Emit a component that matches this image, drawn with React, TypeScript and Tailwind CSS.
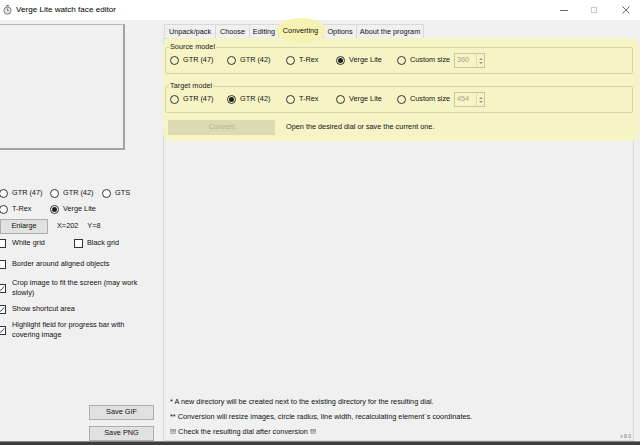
import React from "react";

const FONT = { fontFamily: '"Liberation Sans", Arial, sans-serif' };

function Radio({ checked, bg = "bg-white" }: { checked?: boolean; bg?: string }) {
  return (
    <span className={`w-[9px] h-[9px] rounded-full border border-[#333333] ${bg} flex items-center justify-center shrink-0`}>
      {checked && <span className="w-[5px] h-[5px] rounded-full bg-[#1f1f1f]" />}
    </span>
  );
}

function Check({ checked }: { checked?: boolean }) {
  return (
    <span className="w-[9px] h-[9px] border border-[#333333] bg-white flex items-center justify-center shrink-0">
      {checked && (
        <svg viewBox="0 0 7 7" className="w-[7px] h-[7px]">
          <path d="M0.8 3.6 L2.7 5.4 L6.2 1.4" stroke="#333" strokeWidth="0.9" fill="none" />
        </svg>
      )}
    </span>
  );
}

function RItem({ label, checked, w, bg }: { label: string; checked?: boolean; w: string; bg?: string }) {
  return (
    <div className={`flex items-center gap-[4px] ${w} shrink-0`}>
      <Radio checked={checked} bg={bg} />
      <span className="whitespace-nowrap">{label}</span>
    </div>
  );
}

function NumBox({ value }: { value: string }) {
  return (
    <div className="w-[31px] h-[15px] border border-[#c9c7a2] flex items-center justify-between shrink-0">
      <span className="pl-[2px] text-[#a8a68c]">{value}</span>
      <div className="w-[8px] h-full flex flex-col items-center justify-center gap-[2px] border-l border-[#dedcb6]">
        <svg viewBox="0 0 4 2" className="w-[4px] h-[2px]"><path d="M0 2 L2 0 L4 2Z" fill="#9a9880" /></svg>
        <svg viewBox="0 0 4 2" className="w-[4px] h-[2px]"><path d="M0 0 L2 2 L4 0Z" fill="#9a9880" /></svg>
      </div>
    </div>
  );
}

function Group({ title, sel }: { title: string; sel: number }) {
  const items = [
    { l: "GTR (47)", w: "w-[57px]" },
    { l: "GTR (42)", w: "w-[59px]" },
    { l: "T-Rex", w: "w-[50px]" },
    { l: "Verge Lite", w: "w-[61px]" },
    { l: "Custom size", w: "w-[57px]" },
  ];
  return (
    <div className="relative ml-[2px] w-[468px] h-[27px] border border-[#d6d4ab] rounded-[2px] flex items-center pl-[4px]">
      <span className="absolute left-[3px] top-[-6px] px-[1px] leading-[10px] bg-[#f6f4c4] text-[#1a1a1a]">{title}</span>
      {items.map((it, i) => (
        <RItem key={i} label={it.l} w={it.w} checked={i === sel} bg="bg-transparent" />
      ))}
      <NumBox value={sel === 3 ? "360" : "454"} />
    </div>
  );
}

function Tab({ label, w, selected }: { label: string; w: string; selected?: boolean }) {
  if (selected) {
    return (
      <div className={`relative ${w} h-[17px] flex items-center justify-center shrink-0 mb-[-1px] z-10`}>
        <span className="absolute left-[-2px] right-[-3px] top-[-4px] bottom-[-4px] rounded-[50%] bg-[#f6f3b2]" />
        <span className="relative leading-[10px]">{label}</span>
      </div>
    );
  }
  return (
    <div className={`${w} h-[14px] flex items-center justify-center shrink-0 border-t border-l border-r border-[#d9d9d9] bg-[#f0f0f0] -mr-[1px]`}>
      <span className="leading-[10px]">{label}</span>
    </div>
  );
}

export default function App() {
  return (
    <div className="w-[640px] h-[445px] bg-[#f0f0f0] flex flex-col overflow-hidden text-[7.3px] text-[#111]" style={FONT}>
      {/* Title bar */}
      <div className="h-[20px] bg-white flex items-center shrink-0">
        <svg viewBox="0 0 10 11" className="w-[9px] h-[10px] ml-[3px]">
          <rect x="3.5" y="0" width="3" height="1.6" fill="#777" />
          <circle cx="5" cy="6.2" r="4" fill="#e6e6e6" stroke="#6f6f6f" strokeWidth="1" />
          <path d="M5 6.2 L5 3.8 M5 6.2 L6.6 6.2" stroke="#555" strokeWidth="0.8" />
        </svg>
        <span className="ml-[4px] text-[8.1px] text-black">Verge Lite watch face editor</span>
        <div className="flex-1" />
        <div className="w-[8px] h-[1px] bg-[#6a6a6a] mr-[23px]" />
        <div className="w-[6px] h-[6px] border border-[#c8c8c8] mr-[25px]" />
        <svg viewBox="0 0 8 8" className="w-[8px] h-[8px] mr-[10px]">
          <path d="M0.5 0.5 L7.5 7.5 M7.5 0.5 L0.5 7.5" stroke="#5a5a5a" strokeWidth="0.9" />
        </svg>
      </div>

      <div className="flex flex-1 min-h-0">
        {/* Left panel */}
        <div className="w-[163px] shrink-0 flex flex-col">
          <div className="mt-[4px] ml-[-2px] w-[127px] h-[126px] border-t border-t-[#b9b9b9] border-r-2 border-r-[#a3a3a3] border-b-2 border-b-[#a3a3a3] bg-[#f0f0f0]" />

          <div className="mt-[37px] h-[12px] flex items-center ml-[-1px]">
            <RItem label="GTR (47)" w="w-[51px]" />
            <RItem label="GTR (42)" w="w-[52px]" />
            <RItem label="GTS" w="w-[40px]" />
          </div>
          <div className="mt-[4px] h-[12px] flex items-center ml-[-1px]">
            <RItem label="T-Rex" w="w-[51px]" />
            <RItem label="Verge Lite" checked w="w-[60px]" />
          </div>
          <div className="mt-[4px] h-[15px] flex items-center">
            <div className="w-[48px] h-[15px] bg-[#e1e1e1] border border-[#adadad] flex items-center justify-center">Enlarge</div>
            <span className="ml-[9px]">X=202</span>
            <span className="ml-[9px]">Y=8</span>
          </div>
          <div className="mt-[3px] h-[12px] flex items-center ml-[-3px]">
            <div className="flex items-center gap-[6px] w-[77px]">
              <Check />
              <span>White grid</span>
            </div>
            <div className="flex items-center gap-[4px]">
              <Check />
              <span>Black grid</span>
            </div>
          </div>
          <div className="mt-[9px] h-[12px] flex items-center gap-[6px] ml-[-3px]">
            <Check />
            <span>Border around aligned objects</span>
          </div>
          <div className="mt-[8px] flex items-center gap-[6px] ml-[-3px]">
            <Check checked />
            <span className="leading-[10px]">
              Crop image to fit the screen (may work
              <br />
              slowly)
            </span>
          </div>
          <div className="mt-[5px] h-[12px] flex items-center gap-[6px] ml-[-3px]">
            <Check checked />
            <span>Show shortcut area</span>
          </div>
          <div className="mt-[5px] flex items-center gap-[6px] ml-[-3px]">
            <Check checked />
            <span className="leading-[10px]">
              Highlight field for progress bar with
              <br />
              covering image
            </span>
          </div>

          <div className="flex-1" />
          <div className="ml-[89px] w-[65px] h-[15px] bg-[#e1e1e1] border border-[#adadad] flex items-center justify-center">Save GIF</div>
          <div className="mt-[6px] mb-[0px] ml-[89px] w-[65px] h-[15px] bg-[#e1e1e1] border border-[#adadad] flex items-center justify-center">Save PNG</div>
        </div>

        {/* Right panel */}
        <div className="flex-1 flex flex-col min-w-0">
          <div className="h-[18px] flex items-end pl-[1px] shrink-0">
            <Tab label="Unpack/pack" w="w-[52px]" />
            <Tab label="Choose" w="w-[35px]" />
            <Tab label="Editing" w="w-[30px]" />
            <Tab label="Converting" w="w-[45px]" selected />
            <Tab label="Options" w="w-[34px]" />
            <Tab label="About the program" w="w-[68px]" />
          </div>
          <div className="w-[471px] flex-1 border border-[#d9d9d9] bg-[#f0f0f0] flex flex-col">
            <div className="mt-[-1px] ml-[-1px] mr-[-6px] rounded-[8px] bg-[#f6f4c4] pt-[9px] pb-[6px]">
              <Group title="Source model" sel={3} />
              <div className="h-[12px]" />
              <Group title="Target model" sel={1} />
              <div className="mt-[7px] h-[15px] flex items-center">
                <div className="ml-[5px] w-[107px] h-[15px] bg-[#dcdab1] flex items-center justify-center text-[#b4b296]">Convert</div>
                <span className="ml-[11px]">Open the desired dial or save the current one.</span>
              </div>
            </div>

            <div className="flex-1" />
            <div className="flex items-end justify-between pl-[6px] pr-[2px] pb-[1px]">
              <div className="flex flex-col leading-[15px]">
                <span>* A new directory will be created next to the existing directory for the resulting dial.</span>
                <span>** Conversion will resize images, circle radius, line width, recalculating element`s coordinates.</span>
                <span>!!! Check the resulting dial after conversion !!!</span>
              </div>
              <span className="text-[5px] text-[#777] leading-[6px] mb-[0px]">v 8.0</span>
            </div>
          </div>
        </div>
      </div>
      <div className="h-[4px] bg-[#3d3d3d] border-t border-[#8a8a8a] shrink-0" />
    </div>
  );
}
